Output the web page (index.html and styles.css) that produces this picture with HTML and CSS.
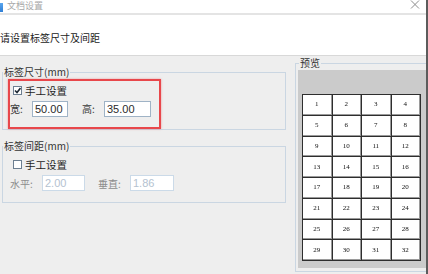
FILE: index.html
```html
<!DOCTYPE html>
<html lang="zh-CN">
<head>
    <meta charset="UTF-8">
    <meta name="viewport" content="width=device-width, initial-scale=1.0">
    <title>文档设置</title>
    <link rel="stylesheet" href="styles.css">
</head>
<body>
    <div class="window">
        <div class="titlebar">
            <span class="app-icon"></span>
            <span class="title">文档设置</span>
            <svg class="close" width="10" height="9" viewBox="0 0 10 9">
                <path d="M1 0.5L9 8.5M9 0.5L1 8.5" stroke="#8c8c8c" stroke-width="1" fill="none"/>
            </svg>
        </div>

        <div class="header">请设置标签尺寸及间距</div>

        <div class="main">
            <div class="left">
                <fieldset class="group size-group">
                    <legend>标签尺寸(mm)</legend>
                    <div class="highlight">
                        <div class="check-row">
                            <span class="check">
                                <svg width="7" height="7" viewBox="0 0 7 7">
                                    <path d="M1 3.5L3 5.5L6.5 1" stroke="#1e2a36" stroke-width="1.6" fill="none"/>
                                </svg>
                            </span>
                            <span>手工设置</span>
                        </div>
                        <div class="field-row">
                            <span class="field-label narrow">宽:</span>
                            <input class="field w36" type="text" value="50.00" readonly>
                            <span class="field-label narrow gap">高:</span>
                            <input class="field w47" type="text" value="35.00" readonly>
                        </div>
                    </div>
                </fieldset>

                <fieldset class="group gap-group">
                    <legend>标签间距(mm)</legend>
                    <div class="check-row">
                        <span class="check"></span>
                        <span>手工设置</span>
                    </div>
                    <div class="field-row disabled">
                        <span class="field-label wide">水平:</span>
                        <input class="field w43" type="text" value="2.00" disabled>
                        <span class="field-label wide gap">垂直:</span>
                        <input class="field w44" type="text" value="1.86" disabled>
                    </div>
                </fieldset>
            </div>

            <fieldset class="group preview">
                <legend>预览</legend>
                <div class="sheet">
                    <div class="labels">
                        <div class="cell">1</div><div class="cell">2</div><div class="cell">3</div><div class="cell">4</div>
                        <div class="cell">5</div><div class="cell">6</div><div class="cell">7</div><div class="cell">8</div>
                        <div class="cell">9</div><div class="cell">10</div><div class="cell">11</div><div class="cell">12</div>
                        <div class="cell">13</div><div class="cell">14</div><div class="cell">15</div><div class="cell">16</div>
                        <div class="cell">17</div><div class="cell">18</div><div class="cell">19</div><div class="cell">20</div>
                        <div class="cell">21</div><div class="cell">22</div><div class="cell">23</div><div class="cell">24</div>
                        <div class="cell">25</div><div class="cell">26</div><div class="cell">27</div><div class="cell">28</div>
                        <div class="cell">29</div><div class="cell">30</div><div class="cell">31</div><div class="cell">32</div>
                    </div>
                </div>
            </fieldset>
        </div>
    </div>
</body>
</html>
```

FILE: styles.css
```css
html, body {
    margin: 0;
    padding: 0;
}

body {
    width: 428px;
    height: 274px;
    overflow: hidden;
    font-family: "Noto Sans CJK SC", "Liberation Sans", sans-serif;
    font-size: 10px;
    color: #2a2a2a;
    background-color: #eeeeee;
}

.window {
    width: 426px;
    height: 274px;
    border-right: 2px solid #5c5c5c;
    display: flex;
    flex-direction: column;
}

.titlebar {
    height: 13px;
    background-color: #ffffff;
    border-bottom: 2px solid #e4e4e4;
    display: flex;
    align-items: flex-start;
}

.app-icon {
    width: 3px;
    height: 9px;
    margin-top: 3px;
    background: linear-gradient(#5aa6ee, #2f7fd6);
}

.title {
    margin-left: 4px;
    margin-top: 1px;
    font-size: 9px;
    line-height: 10px;
    color: #a8a8a8;
}

.close {
    margin-left: auto;
    margin-right: 6px;
}

.header {
    height: 41px;
    box-sizing: border-box;
    padding-top: 16px;
    line-height: 14px;
    background-color: #ffffff;
    border-bottom: 1px solid #d8d8d8;
    color: #222;
}

.main {
    flex: 1;
    display: flex;
    align-items: flex-start;
}

.left {
    width: 284px;
    margin-left: 2px;
    padding-top: 9px;
}

.group {
    margin: 0;
    padding: 0;
    border: 1px solid #cad6e2;
    min-width: 0;
}

.group legend {
    padding: 0 1px;
    margin-left: 0;
    line-height: 14px;
    color: #333;
}

.highlight {
    width: 153px;
    height: 50px;
    box-sizing: border-box;
    margin-left: 5px;
    border: 2px solid #e8474b;
    box-shadow: 0 0 2px rgba(232, 71, 75, 0.5);
}

.check-row {
    display: flex;
    align-items: center;
    height: 19px;
    padding-left: 3px;
    color: #1e1e1e;
    font-size: 10.5px;
}

.check {
    width: 9px;
    height: 9px;
    box-sizing: border-box;
    border: 1px solid #6d7f91;
    background-color: #ffffff;
    margin-right: 3px;
    display: flex;
    align-items: center;
    justify-content: center;
}

.field-row {
    display: flex;
    align-items: center;
    height: 17px;
}

.field-label {
    color: #3a3a3a;
}

.field-label.narrow {
    width: 22px;
}

.field-label.wide {
    width: 32px;
}

.field-label.gap {
    margin-left: 14px;
}

.field-label.wide.gap {
    margin-left: 13px;
}

.field {
    height: 16px;
    box-sizing: border-box;
    margin: 0;
    padding: 0 0 0 2px;
    border: 1px solid #9fb3c6;
    background-color: #ffffff;
    font-family: "Liberation Sans", Arial, sans-serif;
    font-size: 11px;
    color: #2a2a2a;
    outline: none;
}

.w36 { width: 36px; }
.w47 { width: 47px; }
.w43 { width: 43px; }
.w44 { width: 44px; }

.gap-group {
    margin-top: 9px;
    padding-bottom: 11px;
}

.gap-group .check-row {
    height: 22px;
    padding-left: 10px;
}

.gap-group .field-row {
    height: 16px;
    padding-left: 7px;
}

.field-row.disabled .field-label {
    color: #8c8c8c;
}

.field-row.disabled .field {
    border-color: #cbdae8;
    color: #b4c2d0;
}

.preview {
    flex: 1;
    margin-left: 9px;
    padding-left: 2px;
    border-right: none;
    height: 216px;
    box-sizing: border-box;
}

.preview legend {
    margin-left: 1px;
}

.sheet {
    background-color: #cbcbcb;
    padding: 24px 4px 7px 4px;
}

.labels {
    width: 119px;
    height: 167px;
    box-sizing: border-box;
    display: grid;
    grid-template-columns: repeat(4, 1fr);
    grid-template-rows: repeat(8, 1fr);
    gap: 1px;
    padding: 1px;
    background-color: #2e2e2e;
    will-change: transform;
}

.cell {
    background-color: #ffffff;
    border-right: 1px solid #9a9a9a;
    border-bottom: 1px solid #9a9a9a;
    display: flex;
    align-items: center;
    justify-content: center;
    font-family: "Liberation Serif", serif;
    font-size: 7px;
    color: #111;
}
```
